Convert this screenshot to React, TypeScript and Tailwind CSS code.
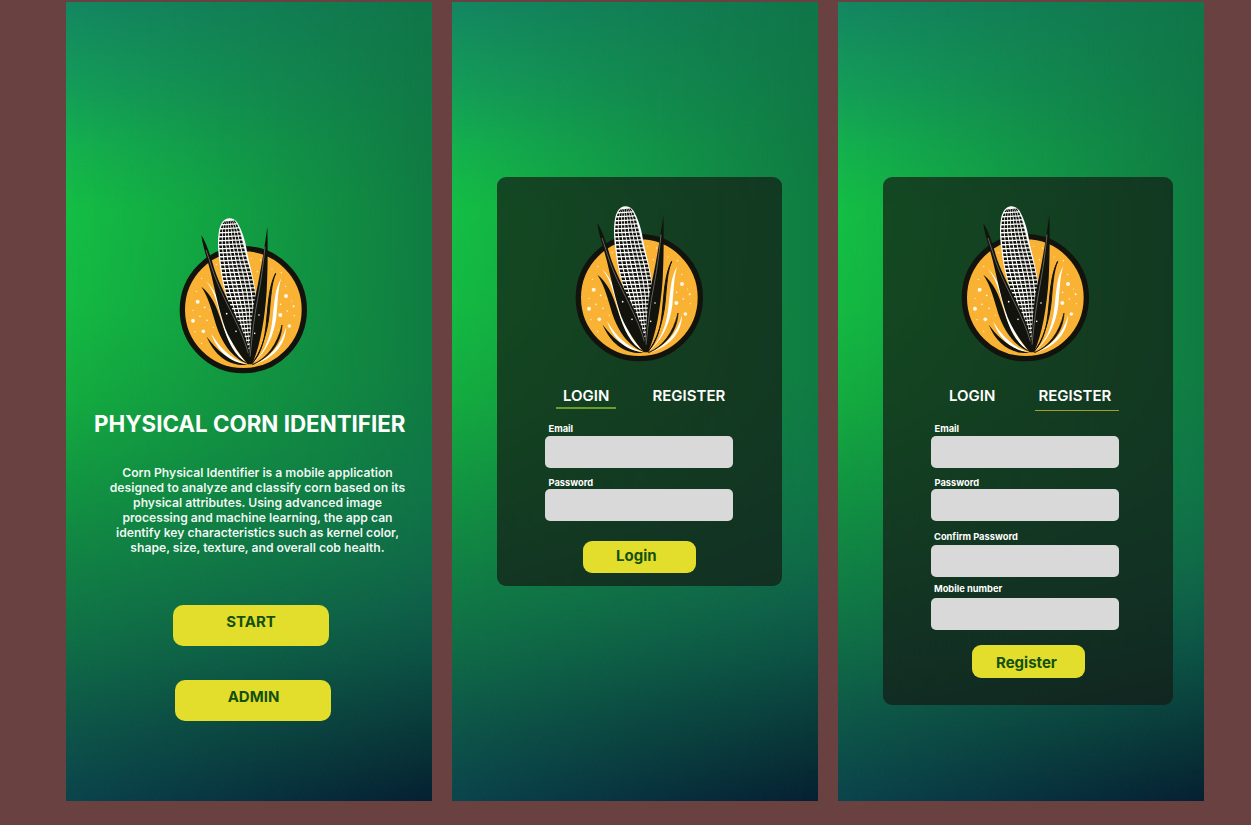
import type { ReactNode } from "react";

type Edge = [y: number, left: number, right: number];

const cobEdges: Edge[] = [
  [30, 164, 193],
  [42, 154, 203],
  [60, 147, 212],
  [100, 143, 223],
  [150, 147, 236],
  [200, 153, 251],
  [250, 164, 261],
  [300, 180, 264],
  [350, 196, 260],
  [440, 226, 252],
];

function edgesAt(y: number): [number, number] {
  for (let i = 1; i < cobEdges.length; i++) {
    const [y1, l1, r1] = cobEdges[i];
    if (y <= y1) {
      const [y0, l0, r0] = cobEdges[i - 1];
      const t = (y - y0) / (y1 - y0);
      return [l0 + (l1 - l0) * t, r0 + (r1 - r0) * t];
    }
  }
  return [226, 252];
}

function kernelPath() {
  const columns = 7;
  let d = "";
  for (let y = 33; y < 430; y += 12) {
    const [l0, r0] = edgesAt(y);
    const [l1, r1] = edgesAt(y + 8);
    for (let c = 0; c < columns; c++) {
      const a = 0.05 + (c * 0.925) / columns;
      const b = a + 0.1;
      const lift = (c - 3) * 0.4;
      const p = (l: number, r: number, f: number) => (l + (r - l) * f).toFixed(1);
      d += `M${p(l0, r0, a)} ${y - lift}L${p(l0, r0, b)} ${y - lift}L${p(l1, r1, b)} ${y + 8 - lift}L${p(l1, r1, a)} ${y + 8 - lift}Z`;
    }
  }
  return d;
}

const kernels = kernelPath();

const dots: [number, number, number][] = [
  [83, 275, 6], [69, 332, 6], [100, 364, 5.5], [104, 292, 2.8], [90, 319, 2.5], [111, 331, 2.5],
  [75, 365, 2], [95, 400, 2], [130, 352, 2], [69, 301, 2], [79, 244, 2], [95, 205, 2],
  [139, 164, 2], [119, 300, 1.5], [348, 258, 6], [331, 315, 6], [358, 348, 5.5], [371, 289, 3],
  [352, 303, 2.5], [373, 317, 2], [332, 283, 2.5], [347, 229, 2], [334, 188, 2], [272, 150, 2],
  [262, 185, 2], [306, 177, 1.5], [325, 360, 1.5], [365, 273, 1.5], [245, 145, 1.5],
];

function CornLogo({ className }: { className: string }) {
  return (
    <svg className={`h-[170px] w-[150px] shrink-0 ${className}`} viewBox="0 0 450 510" aria-hidden="true">
      <circle cx="220" cy="299" r="183" fill="#f9b233" stroke="#13130d" strokeWidth="16" />
      {dots.map(([x, y, r]) => (
        <circle key={`${x}-${y}`} cx={x} cy={y} r={r} fill="#fff8e6" />
      ))}
      <g fill="#13130d">
        <path d="M94 230C124 253 139 287 154 334C170 386 195 436 233 461C185 444 154 394 138 344C125 300 116 263 94 230Z" />
        <path d="M110 380C140 420 172 450 233 465C177 469 134 437 110 380Z" />
        <path d="M317 190C304 220 302 264 297 316C291 371 272 429 246 461C274 430 285 388 290 330C295 276 298 226 317 190Z" stroke="#13130d" strokeWidth="3" />
        <path d="M336 345C334 399 300 443 247 464C290 446 322 405 336 345Z" stroke="#13130d" strokeWidth="2" />
      </g>
      <g fill="#fff">
        <path d="M108 213C140 244 156 291 168 342C181 393 203 435 234 460C194 440 172 394 157 338C143 289 138 251 108 213Z" />
        <path d="M123 370C150 414 181 446 230 462C181 458 142 425 123 370Z" />
        <path d="M334 205C323 237 324 275 319 322C311 383 285 432 247 461C284 428 302 383 308 322C314 270 315 235 334 205Z" />
        <path d="M348 352C347 407 308 447 252 464C299 443 334 406 348 352Z" />
      </g>
      <path
        d="M178 25C161 25 150 43 147 63C142 88 144 124 148 152C152 190 158 222 168 254L196 352L226 440L252 440L260 350C264 310 261 273 255 236C249 194 237 159 231 125C226 88 214 59 203 39C196 29 187 25 178 25Z"
        fill="#fff"
      />
      <path d={kernels} fill="#13130d" />
      <path
        d="M94 76C107 95 117 124 128 160C139 204 166 254 188 300C208 342 231 385 238 428C242 370 244 316 258 250C271 190 284 112 292 50C294 112 293 186 290 244C284 330 270 412 246 463H233C203 425 174 384 160 338C143 286 131 218 118 172C109 137 98 108 94 76Z"
        fill="#13130d"
      />
      <g fill="none" stroke="#d8d8ce" strokeWidth="1.2">
        <path d="M108 120C120 154 128 186 142 218C170 286 216 360 235 430" />
        <path d="M285 110C280 160 274 208 265 256C252 320 247 373 240 440" />
      </g>
      <g fill="#fff">
        <circle cx="170" cy="311" r="2.5" />
        <circle cx="198" cy="364" r="2.5" />
        <circle cx="267" cy="315" r="2.5" />
        <circle cx="254" cy="370" r="2.5" />
      </g>
    </svg>
  );
}

function Phone({ children }: { children: ReactNode }) {
  return (
    <section className="grid h-[799px] w-[366px] shrink-0 bg-[linear-gradient(to_bottom,#107649_0%,#107c42_25%,#107c42_47%,#107547_61%,#106a48_70%,#0f5f48_76%,#0c5144_82%,#0a3e3c_89%,#082e35_95%,#062032_100%)] font-[Inter,sans-serif] text-white">
      <div className="col-start-1 row-start-1 bg-[linear-gradient(to_bottom,#148662_0%,#149d58_11%,#14b04e_18%,#14be44_26%,#14ba42_38%,#14ab40_50%,#129641_60%,#118244_70%,#106e46_80%,#0e5948_89%,#0b444c_100%)] [mask-image:linear-gradient(to_right,black,transparent)]" />
      <div className="z-10 col-start-1 row-start-1 flex flex-col items-start">{children}</div>
    </section>
  );
}

function Tabs({ active }: { active: "login" | "register" }) {
  return (
    <div className="mt-[18px] ml-[59px] flex h-[26px] items-start text-[15px] leading-5 font-semibold whitespace-nowrap">
      <span className={`h-[23px] w-[60px] pl-[7px] ${active === "login" ? "border-b-2 border-[#6e9a2f]" : ""}`}>LOGIN</span>
      <span
        className={`ml-[33px] h-[25px] w-[84px] pl-[3.5px] ${active === "register" ? "border-b-[1.5px] border-[#a09f2c]" : ""}`}
      >
        REGISTER
      </span>
    </div>
  );
}

function Field({ label, className, labelClass }: { label: string; className: string; labelClass: string }) {
  return (
    <label className={`flex w-[187.5px] flex-col ${className}`}>
      <span className={`text-[9.3px] leading-3 font-bold whitespace-nowrap ${labelClass}`}>{label}</span>
      <input className="h-[32px] w-full rounded-[5px] bg-[#d9d9d9] outline-none" />
    </label>
  );
}

export default function App() {
  return (
    <main className="flex h-[825px] w-[1251px] items-start gap-5 overflow-hidden bg-[#694140] pt-[2px] pl-[66px]">
      <Phone>
        <CornLogo className="mt-[208px] ml-[104px]" />
        <h1 className="mt-[30px] ml-[28px] text-[22.35px] leading-7 font-bold whitespace-nowrap">PHYSICAL CORN IDENTIFIER</h1>
        <p className="mt-[27px] ml-[31.5px] w-[320px] text-center text-[12.15px] leading-[15px] font-semibold whitespace-nowrap text-white/95">
          Corn Physical Identifier is a mobile application
          <br />
          designed to analyze and classify corn based on its
          <br />
          physical attributes. Using advanced image
          <br />
          processing and machine learning, the app can
          <br />
          identify key characteristics such as kernel color,
          <br />
          shape, size, texture, and overall cob health.
        </p>
        <button className="mt-[50px] ml-[107px] flex h-[41px] w-[156px] items-start justify-center rounded-[10px] bg-[#e2de2b] pt-[7px] text-[15px] leading-5 font-bold text-[#14500f]">
          START
        </button>
        <button className="mt-[34px] ml-[109px] flex h-[41px] w-[156px] items-start justify-center rounded-[10px] bg-[#e2de2b] pt-[7px] pl-px text-[15px] leading-5 font-bold text-[#14500f]">
          ADMIN
        </button>
      </Phone>

      <Phone>
        <div className="mt-[174.5px] ml-[45px] flex h-[409px] w-[285px] flex-col items-start rounded-[9px] bg-[rgba(20,26,20,0.7)]">
          <CornLogo className="mt-[21.5px] ml-[69px]" />
          <Tabs active="login" />
          <Field label="Email" className="mt-[11px] ml-[48px]" labelClass="mb-[1px] ml-[3.5px]" />
          <Field label="Password" className="mt-[8.5px] ml-[48px]" labelClass="ml-[3.5px]" />
          <button className="mt-[20px] ml-[86px] flex h-[32.5px] w-[113px] items-start rounded-[9px] bg-[#e2de2b] pt-[5.5px] pl-[33px] text-[15px] leading-5 font-bold text-[#14500f]">
            Login
          </button>
        </div>
      </Phone>

      <Phone>
        <div className="mt-[174.5px] ml-[45px] flex h-[528.5px] w-[289.5px] flex-col items-start rounded-[9px] bg-[rgba(20,26,20,0.7)]">
          <CornLogo className="mt-[21.5px] ml-[69px]" />
          <Tabs active="register" />
          <Field label="Email" className="mt-[11px] ml-[48px]" labelClass="mb-[1px] ml-[3.5px]" />
          <Field label="Password" className="mt-[8.5px] ml-[48px]" labelClass="ml-[3.5px]" />
          <Field label="Confirm Password" className="mt-[10px] ml-[48px]" labelClass="mb-[2.5px] ml-[3px]" />
          <Field label="Mobile number" className="mt-[5.5px] ml-[48px]" labelClass="mb-[3px] ml-[3px]" />
          <button className="mt-[15.5px] ml-[89px] flex h-[33px] w-[113px] items-start rounded-[9px] bg-[#e2de2b] pt-[7.5px] pl-[24px] text-[15px] leading-5 font-bold text-[#14500f]">
            Register
          </button>
        </div>
      </Phone>
    </main>
  );
}
